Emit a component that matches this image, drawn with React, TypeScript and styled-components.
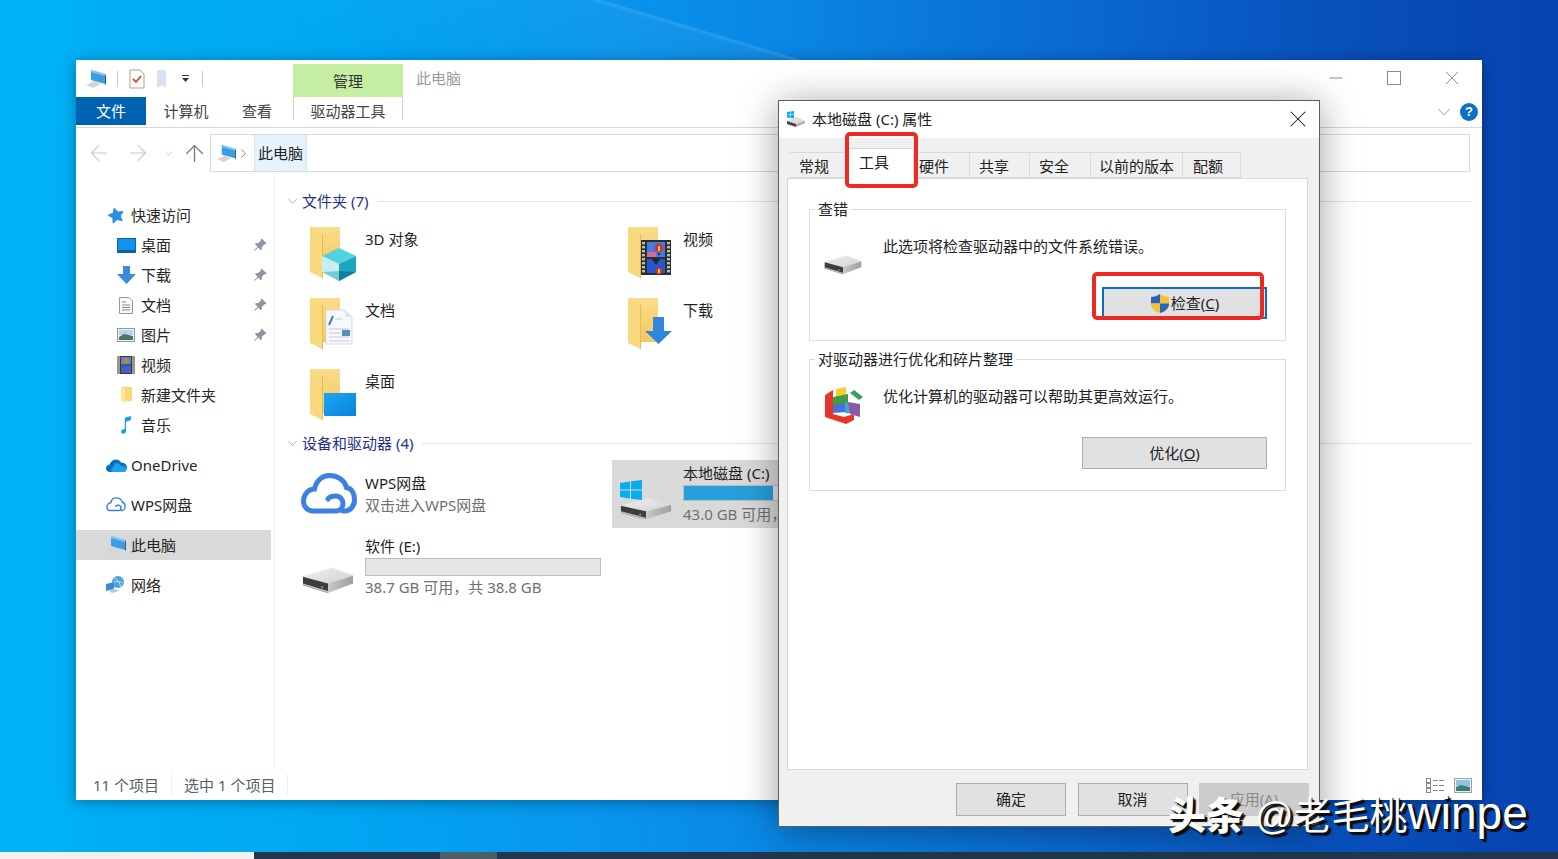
import { ReactNode } from "react";
import styled, { createGlobalStyle } from "styled-components";
import { ArrowLeft, ArrowRight, ArrowUp, ChevronDown, ChevronRight, Minus, X } from "lucide-react";
import { BsPinAngleFill, BsStarFill } from "react-icons/bs";
import { IoMusicalNote } from "react-icons/io5";

const GlobalStyle = createGlobalStyle`
  html, body {
    margin: 0;
    overflow: hidden;
  }
  body {
    font-family: "Noto Sans", "Noto Sans CJK SC", sans-serif;
    font-size: 15px;
    line-height: 22px;
    color: #262626;
  }
`;

const Desktop = styled.div`
  display: flex;
  flex-direction: column;
  width: 1558px;
  height: 859px;
  overflow: hidden;
`;

const Wallpaper = styled.div`
  position: relative;
  flex: 1;
  background: linear-gradient(90deg, #00b3f7 0%, #00a8f3 20%, #0896ee 38%, #0a84e2 52%, #0a68d0 70%, #0850bc 86%, #0642b0 100%);

  /* the light beam that runs down to the explorer's top edge */
  &::before {
    content: "";
    position: absolute;
    left: 0;
    top: 0;
    width: 820px;
    height: 60px;
    background: linear-gradient(
      196.7deg,
      rgba(255, 255, 255, 0) 0 21.2%,
      rgba(255, 255, 255, 0.14) 21.7%,
      rgba(255, 255, 255, 0.04) 23%,
      rgba(255, 255, 255, 0) 60%
    );
  }
`;

const Taskbar = styled.div`
  display: flex;
  height: 7px;
  background: #22384a;
`;

const SearchBox = styled.div`
  width: 254px;
  background: #f1f1f1;
`;

const TaskbarActive = styled.div`
  width: 57px;
  margin-left: 186px;
  background: #4c5e68;
`;

/* explorer window */
const Explorer = styled.div`
  position: absolute;
  left: 76px;
  top: 60px;
  display: flex;
  flex-direction: column;
  width: 1406px;
  height: 740px;
  background: #fff;
  box-shadow: 0 2px 14px rgba(0, 0, 0, 0.35);
`;

const TitleRow = styled.div`
  display: flex;
  align-items: flex-start;
  height: 37px;
  padding-left: 10px;
`;

const QuickTools = styled.div`
  display: flex;
  align-items: center;
  gap: 11px;
  height: 37px;
  width: 207px;
`;

const ToolSep = styled.div`
  width: 1px;
  height: 16px;
  background: #c9c9c9;
`;

const ContextTab = styled.div`
  width: 110px;
  height: 33px;
  margin-top: 4px;
  background: #c6eea3;
  text-align: center;
  line-height: 34px;
  color: #333;
`;

const WindowName = styled.div`
  margin: 7px 0 0 13px;
  color: #9a9a9a;
`;

const WindowControls = styled.div`
  display: flex;
  margin-left: auto;
  margin-right: 1px;
`;

const WindowButton = styled.div`
  display: flex;
  align-items: center;
  justify-content: center;
  width: 58px;
  height: 36px;
  color: #8c8c8c;
`;

const MaximizeBox = styled.div`
  width: 12px;
  height: 12px;
  border: 1px solid #8c8c8c;
`;

const RibbonTabs = styled.div`
  display: flex;
  align-items: flex-start;
  height: 31px;
  border-bottom: 1px solid #dadada;
  box-sizing: border-box;
`;

const FileTab = styled.div`
  width: 70px;
  height: 28px;
  background: #0063b1;
  color: #fff;
  text-align: center;
  line-height: 29px;
`;

const RibbonTab = styled.div<{ $width: number }>`
  width: ${({ $width }) => $width}px;
  height: 23px;
  text-align: center;
  line-height: 29px;
  color: #444;
`;

const ToolsTab = styled(RibbonTab)`
  margin-left: 5px;
  border-left: 1px solid #d4d4d4;
  border-right: 1px solid #d4d4d4;
  box-sizing: border-box;
`;

const RibbonRight = styled.div`
  display: flex;
  align-items: center;
  gap: 5px;
  margin-left: auto;
  margin-right: 4px;
  height: 30px;
  color: #a8a8a8;
`;

const HelpBadge = styled.div`
  width: 18px;
  height: 18px;
  border-radius: 50%;
  background: #0c6fc8;
  color: #fff;
  font: bold 13px/18px "Liberation Sans", sans-serif;
  text-align: center;
`;

const AddressRow = styled.div`
  display: flex;
  align-items: center;
  height: 44px;
  padding: 6px 12px 0 0;
  box-sizing: border-box;
`;

const NavButtons = styled.div`
  display: flex;
  align-items: center;
  width: 134px;
  padding-left: 10px;
  box-sizing: border-box;
  color: #c9c9c9;
`;

const NavForward = styled.span`
  display: flex;
  margin-left: 13px;
`;

const NavChevron = styled.span`
  display: flex;
  margin-left: 11px;
`;

const NavUp = styled.span`
  display: flex;
  margin-left: 6px;
  color: #7b7b7b;
`;

const AddressBox = styled.div`
  display: flex;
  align-items: center;
  flex: 1;
  height: 38px;
  border: 1px solid #d9d9d9;
  box-sizing: border-box;
  padding-left: 6px;
`;

const Crumb = styled.div`
  height: 36px;
  padding: 0 3px 0 3px;
  margin-left: 3px;
  background: #e5f3ff;
  border-left: 1px solid #d5e8f8;
  border-right: 1px solid #d5e8f8;
  line-height: 36px;
  color: #222;
`;

const Main = styled.div`
  display: flex;
  flex: 1;
  min-height: 0;
`;

const NavPane = styled.div`
  width: 199px;
  padding-top: 28px;
  border-right: 1px solid #f0f0f0;
  box-sizing: border-box;
`;

const NavGroup = styled.div`
  margin-bottom: 10px;
`;

const NavRow = styled.div<{ $child?: boolean; $selected?: boolean }>`
  display: flex;
  align-items: center;
  gap: 4px;
  width: 195px;
  height: 30px;
  padding-left: ${({ $child }) => ($child ? 39 : 29)}px;
  padding-right: 4px;
  box-sizing: border-box;
  background: ${({ $selected }) => ($selected ? "#d9d9d9" : "transparent")};
`;

const NavIcon = styled.span`
  display: flex;
  align-items: center;
  justify-content: center;
  width: 22px;
  height: 22px;
`;

const StarMark = styled.span`
  display: flex;
  transform: rotate(-14deg);
`;

const PinMark = styled.span`
  display: flex;
  margin-left: auto;
  color: #8a97a3;
`;

const Content = styled.div`
  flex: 1;
  min-width: 0;
  padding: 18px 10px 0 0;
  overflow: hidden;
`;

const SectionHeader = styled.div`
  display: flex;
  align-items: center;
  gap: 2px;
  height: 22px;
  padding-left: 10px;
  margin-bottom: 6px;
  color: #1e3287;
`;

const SectionToggle = styled.span`
  display: flex;
  color: #8a8a8a;
`;

const SectionLine = styled.div`
  flex: 1;
  height: 1px;
  margin-left: 7px;
  background: #e3e3e3;
`;

const TileGrid = styled.div`
  display: grid;
  grid-template-columns: repeat(2, 312px);
  column-gap: 6px;
  padding-left: 19px;
  margin-bottom: 1px;
`;

const FolderTile = styled.div`
  display: flex;
  height: 71px;
`;

const FolderIconBox = styled.div`
  width: 60px;
  height: 60px;
  margin: 7px 0 0 11px;
`;

const TileLabel = styled.div`
  margin-top: 10px;
  color: #1f1f1f;
`;

const DriveTile = styled.div<{ $selected?: boolean }>`
  display: flex;
  height: 70px;
  background: linear-gradient(
    ${({ $selected }) => ($selected ? "#d9d9d9 0 68px, transparent 68px" : "transparent, transparent")}
  );
`;

const DriveIconBox = styled.div<{ $top: number; $left: number }>`
  flex: none;
  width: 71px;
  height: 68px;
  padding: ${({ $top, $left }) => `${$top}px 0 0 ${$left}px`};
  box-sizing: border-box;
`;

const DriveText = styled.div<{ $top: number }>`
  flex: 1;
  min-width: 0;
  padding-top: ${({ $top }) => $top}px;
`;

const DriveName = styled.div`
  color: #1f1f1f;
`;

const DriveSub = styled.div`
  color: #707070;
  white-space: nowrap;
`;

const UsageTrack = styled.div<{ $height: number; $after: number }>`
  width: 236px;
  height: ${({ $height }) => $height}px;
  margin: 1px 0 ${({ $after }) => $after}px;
  background: #e6e6e6;
  border: 1px solid #bcbcbc;
  box-sizing: border-box;
`;

const UsageFill = styled.div`
  height: 100%;
  background: #26a0da;
`;

const StatusBar = styled.div`
  display: flex;
  align-items: center;
  height: 30px;
  padding: 0 10px 0 17px;
  color: #55606b;
`;

const StatusItem = styled.div`
  padding-right: 12px;
  margin-right: 12px;
  border-right: 1px solid #f0f0f0;
`;

const ViewIcons = styled.div`
  display: flex;
  gap: 9px;
  margin-left: auto;
`;

/* properties dialog */
const Dialog = styled.div`
  position: absolute;
  left: 778px;
  top: 100px;
  display: flex;
  flex-direction: column;
  width: 542px;
  height: 727px;
  border: 1px solid #5f5f5f;
  box-sizing: border-box;
  background: #f0f0f0;
  box-shadow: 0 4px 36px rgba(0, 0, 0, 0.38);
`;

const DialogTitle = styled.div`
  display: flex;
  align-items: center;
  height: 37px;
  padding: 0 0 2px 8px;
  box-sizing: border-box;
  background: #fff;
  color: #222;
`;

const DialogName = styled.div`
  margin-left: 7px;
`;

const DialogClose = styled.div`
  display: flex;
  margin-left: auto;
  margin-right: 7px;
  color: #222;
`;

const DialogBody = styled.div`
  display: flex;
  flex-direction: column;
  flex: 1;
  min-height: 0;
  padding: 10px 11px 0 8px;
`;

const TabStrip = styled.div`
  display: flex;
  align-items: flex-end;
  height: 30px;
  padding-left: 3px;
`;

const Tab = styled.div<{ $width: number; $inset: number; $active?: boolean }>`
  position: relative;
  width: ${({ $width }) => $width}px;
  height: ${({ $active }) => ($active ? 31 : 26)}px;
  margin-bottom: ${({ $active }) => ($active ? -1 : 0)}px;
  padding-left: ${({ $inset }) => $inset}px;
  box-sizing: border-box;
  border: 1px solid #d9d9d9;
  border-bottom: ${({ $active }) => ($active ? "none" : "1px solid #d9d9d9")};
  border-left: ${({ $active }) => ($active ? "1px solid #d9d9d9" : "none")};
  background: ${({ $active }) => ($active ? "#fff" : "#f0f0f0")};
  line-height: ${({ $active }) => ($active ? 27 : 26)}px;
  color: #222;
  z-index: ${({ $active }) => ($active ? 1 : 0)};
`;

const TabPanel = styled.div`
  display: flex;
  flex-direction: column;
  gap: 18px;
  flex: 1;
  min-height: 0;
  padding: 30px 0 0 21px;
  background: #fff;
  border: 1px solid #d9d9d9;
  box-sizing: border-box;
`;

const GroupBox = styled.div`
  position: relative;
  display: grid;
  grid-template-columns: 60px 1fr;
  grid-template-rows: 78px 32px;
  width: 477px;
  height: 132px;
  padding: 0 18px 0 14px;
  border: 1px solid #dcdcdc;
  box-sizing: border-box;
`;

const GroupLegend = styled.div`
  position: absolute;
  left: 5px;
  top: -12px;
  padding: 0 3px;
  background: #fff;
  color: #222;
`;

const GroupIcon = styled.div<{ $top: number }>`
  padding-top: ${({ $top }) => $top}px;
`;

const GroupText = styled.div`
  padding-top: 25px;
  margin-left: -1px;
  color: #222;
`;

const ActionButton = styled.div<{ $width: number; $focused?: boolean }>`
  grid-column: 1 / 3;
  justify-self: end;
  display: flex;
  align-items: center;
  justify-content: center;
  gap: 1px;
  width: ${({ $width }) => $width}px;
  height: 32px;
  margin-top: -1px;
  box-sizing: border-box;
  background: #e1e1e1;
  border: ${({ $focused }) => ($focused ? "2px solid #0a6cc4" : "1px solid #adadad")};
  color: #222;
`;

const DialogFooter = styled.div`
  display: flex;
  justify-content: flex-end;
  gap: 11.5px;
  height: 56px;
  padding: 13px 0 0;
  margin-right: -1px;
  box-sizing: border-box;
`;

const FooterButton = styled.div<{ $disabled?: boolean }>`
  width: 110px;
  height: 33px;
  box-sizing: border-box;
  background: ${({ $disabled }) => ($disabled ? "#cccccc" : "#e1e1e1")};
  border: 1px solid ${({ $disabled }) => ($disabled ? "#cccccc" : "#adadad")};
  text-align: center;
  line-height: 31px;
  color: ${({ $disabled }) => ($disabled ? "#8a8a8a" : "#222")};
`;

const Annotation = styled.div<{ $left: number; $top: number; $width: number; $height: number }>`
  position: absolute;
  left: ${({ $left }) => $left}px;
  top: ${({ $top }) => $top}px;
  width: ${({ $width }) => $width}px;
  height: ${({ $height }) => $height}px;
  border: 4px solid #ea2a23;
  border-radius: 5px;
  box-sizing: border-box;
  z-index: 2;
`;

const Watermark = styled.div`
  position: absolute;
  left: 1168px;
  top: 788px;
  display: flex;
  align-items: baseline;
  white-space: nowrap;
  color: #fff;
  font-family: "Liberation Sans", "Noto Sans CJK SC", sans-serif;
  font-size: 38px;
  line-height: 50px;
  text-shadow: 3px 3px 1px #0c0c0c, 1px 1px 1px #0c0c0c;
`;

const WatermarkBrand = styled.span`
  font-weight: 900;
  margin-right: 11px;
`;

const WatermarkLatin = styled.span`
  font-size: 46px;
`;

/* icons */
const ComputerIcon = ({ size = 20 }: { size?: number }) => (
  <svg width={size} height={size} viewBox="0 0 20 20">
    <polygon points="0,16 8,12 15,15 7,19" fill="#d2d6d9" />
    <polygon points="5,1 19,5 19,15 5,11" fill="#3c9ee2" />
    <polygon points="5,1 19,5 19,7 5,3" fill="#86c8f2" />
    <polygon points="19,5 20,6 20,16 19,15" fill="#4a5660" />
  </svg>
);

const CheckDocIcon = () => (
  <svg width="16" height="20" viewBox="0 0 16 20">
    <path d="M1 1h10l4 4v14H1z" fill="#fff" stroke="#b5a08e" />
    <path d="M4 10l3 3 5-6" fill="none" stroke="#d5482c" strokeWidth="1.8" />
  </svg>
);

const PaleDocIcon = () => (
  <svg width="14" height="18" viewBox="0 0 14 18">
    <path d="M1 0h8l1 2v16l-4-3-5 3z" fill="#d6e2f0" />
  </svg>
);

const DropMark = () => (
  <svg width="10" height="10" viewBox="0 0 10 10">
    <rect x="1" y="1" width="7" height="1" fill="#333" />
    <polygon points="1,4 8,4 4.5,8" fill="#333" />
  </svg>
);

const FolderBase = ({ children }: { children?: ReactNode }) => (
  <svg width="60" height="60" viewBox="0 0 60 60">
    <defs>
      <linearGradient id="folderBack" x1="0" y1="0" x2="0" y2="1">
        <stop offset="0" stopColor="#fbdc8c" />
        <stop offset="1" stopColor="#f3c95f" />
      </linearGradient>
    </defs>
    <polygon points="5,2 35,2 35,46 17,46 5,46" fill="url(#folderBack)" />
    <polygon points="5,2 17,9 17,53 5,47" fill="#f9d97e" />
    <polygon points="17,9 18,9 18,53 17,53" fill="#e6bb52" />
    {children}
  </svg>
);

const CubeOverlay = () => (
  <>
    <polygon points="34,23 51,31 34,39 17,31" fill="#4fd3de" />
    <polygon points="17,31 34,39 34,56 17,47" fill="#c6edf0" />
    <polygon points="34,39 51,31 51,47 34,56" fill="#1fa6bf" />
    <polygon points="34,46 51,47 34,56" fill="#137f9c" />
    <polygon points="17,47 34,46 34,56" fill="#73cdd8" />
  </>
);

const sprockets = [17, 21, 25, 29, 33, 37, 41, 45];

const FilmOverlay = () => (
  <>
    <rect x="18" y="15" width="30" height="35" fill="#26302e" />
    {sprockets.map((y) => (
      <g key={y} fill="#b9bfa8">
        <rect x="19" y={y} width="3" height="2.4" />
        <rect x="44" y={y} width="3" height="2.4" />
      </g>
    ))}
    <rect x="24" y="17" width="18" height="15" fill="#4a78e0" />
    <rect x="24" y="34" width="18" height="14" fill="#2456cc" />
    <rect x="24" y="27" width="9" height="5" fill="#d06a9c" />
    <circle cx="36" cy="23" r="4" fill="#c8352c" />
    <rect x="35" y="21" width="2" height="5" fill="#e8c440" />
    <rect x="35" y="28" width="2" height="2" fill="#2b2b2b" />
    <path d="M29 34L37 34L33 40Z" fill="#20261f" />
    <circle cx="36" cy="46" r="3.5" fill="#c8352c" />
    <rect x="35" y="44" width="2" height="4" fill="#e8c440" />
  </>
);

const DocOverlay = () => (
  <>
    <path d="M21 14h19l7 7v27H21z" fill="#f6f8fa" stroke="#d5dbe0" />
    <path d="M40 14v7h7z" fill="#dfe5ea" />
    <path d="M24 29l4-9" stroke="#3d7cc9" strokeWidth="2" />
    <path d="M30 23h8M24 33h20M24 37h12M24 41h20M24 45h20" stroke="#c3ccd6" />
    <rect x="37" y="34" width="8" height="6" fill="#5a8fb5" />
  </>
);

const DesktopOverlay = () => (
  <>
    <defs>
      <linearGradient id="screenBlue" x1="0" y1="0" x2="1" y2="1">
        <stop offset="0" stopColor="#1aa7f5" />
        <stop offset="1" stopColor="#0a82dc" />
      </linearGradient>
    </defs>
    <rect x="19" y="26" width="32" height="23" fill="url(#screenBlue)" />
  </>
);

const DownloadOverlay = () => (
  <polygon points="30,21 41,21 41,35 49,35 35.5,48 22,35 30,35" fill="#2f86dd" />
);

const WpsCloudIcon = ({ size = 56, width = 5 }: { size?: number; width?: number }) => (
  <svg width={size} height={(size * 44) / 56} viewBox="0 0 56 44">
    <path
      d="M27 26C29 23 32 23 35 23C39 23 42 27 42 30.5C42 35 38.5 38 35 38L12 38C6 38 2.5 33 2.5 28C2.5 21 8 16 13.5 16C15 8 21 2.5 28.5 2.5C37 2.5 44 8 45.5 14.5C51 15.5 53.5 21 53.5 27C53.5 33 49 38 44 38L42 38"
      fill="none"
      stroke="#3b80e2"
      strokeWidth={width}
      strokeLinecap="round"
    />
  </svg>
);

const DriveGraphic = ({ width = 54, height = 28 }: { width?: number; height?: number }) => (
  <svg width={width} height={height} viewBox="0 0 54 28" preserveAspectRatio="none">
    <defs>
      <linearGradient id="driveTop" x1="0" y1="0" x2="1" y2="1">
        <stop offset="0" stopColor="#f0f0f0" />
        <stop offset="1" stopColor="#d2d2d2" />
      </linearGradient>
      <linearGradient id="driveSide" x1="0" y1="0" x2="1" y2="0">
        <stop offset="0" stopColor="#c9c9c9" />
        <stop offset="1" stopColor="#9e9e9e" />
      </linearGradient>
    </defs>
    <polygon points="1,10 31,1 53,9 27,17" fill="url(#driveTop)" stroke="url(#driveTop)" strokeLinejoin="round" />
    <polygon points="1,10 27,17 27,27 1,19" fill="#3d3d3d" />
    <polygon points="1,17 27,25 27,27 1,19" fill="#bdbdbd" />
    <polygon points="27,17 53,9 53,17 27,27" fill="url(#driveSide)" />
    <rect x="20" y="20" width="2" height="2" fill="#46c46a" />
  </svg>
);

const WindowsPanes = () => (
  <svg width="22" height="20" viewBox="0 0 22 20">
    <polygon points="0,3 10,1.5 10,9.5 0,9.5" fill="#06aef0" />
    <polygon points="11,1.3 22,0 22,9.5 11,9.5" fill="#06aef0" />
    <polygon points="0,10.5 10,10.5 10,18.5 0,17" fill="#06aef0" />
    <polygon points="11,10.5 22,10.5 22,20 11,18.7" fill="#06aef0" />
  </svg>
);

const SystemDrive = styled.div`
  display: grid;
  grid-template-rows: 18px auto;
  justify-items: start;
`;

const ShieldIcon = () => (
  <svg width="20" height="21" viewBox="0 0 20 21">
    <path d="M10 1C7 3 4 4 1 4V10.5H10Z" fill="#2a63b8" />
    <path d="M10 1C13 3 16 4 19 4V10.5H10Z" fill="#f2c230" />
    <path d="M1 10.5H10V20C6 19 1 16 1 11Z" fill="#f2c230" />
    <path d="M19 10.5H10V20C14 19 19 16 19 11Z" fill="#2a63b8" />
  </svg>
);

const DefragIcon = () => (
  <svg width="40" height="38" viewBox="0 0 40 38">
    <polygon points="1,8 9,3 9,27 20,30 30,27 30,33 22,37 1,30" fill="#e8352b" />
    <polygon points="12,2 22,0 22,10 12,12" fill="#f3d02a" />
    <polygon points="9,10 24,7 24,16 9,19" fill="#3f9d48" />
    <polygon points="9,18 22,16 22,25 9,26" fill="#4672d8" />
    <polygon points="21,16 27,16 27,26 21,26" fill="#3fa6d8" />
    <polygon points="24,15 36,17 36,30 26,27" fill="#8a5aa8" />
    <polygon points="26,6 30,3 39,10 35,13" fill="#3c9d5a" />
  </svg>
);

const SmallDesktop = () => (
  <svg width="19" height="15" viewBox="0 0 19 15">
    <rect x="0.5" y="0.5" width="18" height="14" fill="#1292ea" stroke="#0a67ad" />
    <rect x="1" y="12" width="17" height="2" fill="#0a5f9e" />
  </svg>
);

const SmallDown = () => (
  <svg width="19" height="18" viewBox="0 0 19 18">
    <polygon points="6,0 13,0 13,8 19,8 9.5,18 0,8 6,8" fill="#3a8be0" />
  </svg>
);

const SmallDoc = () => (
  <svg width="14" height="17" viewBox="0 0 14 17">
    <path d="M0.5 0.5H10L13.5 4V16.5H0.5Z" fill="#f7f9fb" stroke="#8f99a3" />
    <path d="M3 5H7M3 8H11M3 10.5H11M3 13H11" stroke="#7f8a96" />
  </svg>
);

const SmallPicture = () => (
  <svg width="18" height="14" viewBox="0 0 18 14">
    <rect x="0.5" y="0.5" width="17" height="13" fill="#eef2f5" stroke="#8f99a3" />
    <rect x="2" y="2" width="14" height="5" fill="#b7d3e6" />
    <polygon points="2,9 7,6 16,8 16,12 2,12" fill="#4f7463" />
  </svg>
);

const SmallFilm = () => (
  <svg width="18" height="18" viewBox="0 0 18 18">
    <rect width="18" height="18" fill="#3a3a3a" />
    <rect x="0" y="0" width="3" height="18" fill="#9a9a85" />
    <rect x="15" y="0" width="3" height="18" fill="#9a9a85" />
    <rect x="4" y="1" width="10" height="7.5" fill="#5f84cf" />
    <rect x="4" y="9.5" width="10" height="7.5" fill="#3d61c4" />
    <circle cx="9" cy="5" r="2.5" fill="#c2872c" />
  </svg>
);

const SmallFolder = () => (
  <svg width="12" height="16" viewBox="0 0 12 16">
    <rect x="1" y="0" width="11" height="14" fill="#f8d775" />
    <polygon points="1,0 5,2 5,16 1,14" fill="#fce6a0" />
  </svg>
);

const OneDriveIcon = () => (
  <svg width="21" height="13" viewBox="0 0 21 13">
    <path d="M4 13C1.5 13 0 11.3 0 9.3C0 7.3 1.5 5.8 3.5 5.6C4.5 2.5 7 0.5 10 0.5C12.4 0.5 14.4 1.8 15.4 3.8C18.5 3.6 21 5.6 21 8.5C21 11 19.3 13 17 13Z" fill="#0a6fc4" />
    <path d="M10 4C12.5 4 14.3 5.2 15 7C18 7 20.5 8 21 9C20.6 11.4 19 13 17 13H7C5.8 13 5 12 5 10.8C5 9.3 6.2 8.2 7.6 8.2C7.8 6 8.6 4.4 10 4Z" fill="#1aa3e8" />
  </svg>
);

const NetworkIcon = () => (
  <svg width="20" height="18" viewBox="0 0 20 18">
    <circle cx="12" cy="6" r="6" fill="#4fa3dc" />
    <path d="M8 2c3 1 6 5 7 9M6 7c3-2 8-2 11 0" stroke="#c8e6f7" fill="none" />
    <polygon points="0,8 8,6 8,13 0,15" fill="#3b8dcf" />
    <polygon points="3,15 10,13 13,15 6,17" fill="#b8c4cc" />
  </svg>
);

const ListViewIcon = () => (
  <svg width="19" height="15" viewBox="0 0 19 15">
    <g fill="none" stroke="#8a8a8a">
      <rect x="0.5" y="0.5" width="4" height="4" />
      <rect x="0.5" y="5.5" width="4" height="4" />
      <rect x="0.5" y="10.5" width="4" height="4" />
      <path d="M7 2.5H18M7 7.5H18M7 12.5H18" strokeDasharray="5 1" />
    </g>
  </svg>
);

const ThumbViewIcon = () => (
  <svg width="18" height="15" viewBox="0 0 18 15">
    <rect x="0.5" y="0.5" width="17" height="14" fill="#e8eef2" stroke="#9aa4ac" />
    <rect x="2" y="2" width="14" height="6" fill="#8ec3e2" />
    <polygon points="2,9 7,7 16,9 16,13 2,13" fill="#3e7a78" />
  </svg>
);

const SystemDriveMini = () => (
  <svg width="18" height="16" viewBox="0 0 18 16">
    <polygon points="0,1 3,0.5 3,3.5 0,3.5" fill="#06aef0" />
    <polygon points="3.5,0.4 7,0 7,3.5 3.5,3.5" fill="#06aef0" />
    <polygon points="0,4 3,4 3,7 0,6.5" fill="#06aef0" />
    <polygon points="3.5,4 7,4 7,7.5 3.5,7" fill="#06aef0" />
    <polygon points="0,10 9,6 18,10 9,13" fill="#dcdcdc" />
    <polygon points="0,10 9,13 9,16 0,13" fill="#444" />
    <polygon points="9,13 18,10 18,12 9,16" fill="#aaa" />
  </svg>
);

const quickAccess = [
  { label: "桌面", icon: <SmallDesktop />, pinned: true },
  { label: "下载", icon: <SmallDown />, pinned: true },
  { label: "文档", icon: <SmallDoc />, pinned: true },
  { label: "图片", icon: <SmallPicture />, pinned: true },
  { label: "视频", icon: <SmallFilm /> },
  { label: "新建文件夹", icon: <SmallFolder /> },
  { label: "音乐", icon: <IoMusicalNote size={20} color="#1c9be6" /> },
];

const folders = [
  { label: "3D 对象", overlay: <CubeOverlay /> },
  { label: "视频", overlay: <FilmOverlay /> },
  { label: "文档", overlay: <DocOverlay /> },
  { label: "下载", overlay: <DownloadOverlay /> },
  { label: "桌面", overlay: <DesktopOverlay /> },
];

const tabs = [
  { label: "常规", width: 58, inset: 9 },
  { label: "工具", width: 66, inset: 10, active: true },
  { label: "硬件", width: 56, inset: 5 },
  { label: "共享", width: 60, inset: 9 },
  { label: "安全", width: 61, inset: 9 },
  { label: "以前的版本", width: 92, inset: 8 },
  { label: "配额", width: 58, inset: 10 },
];

export default function App() {
  return (
    <>
      <GlobalStyle />
      <Desktop>
        <Wallpaper>
          <Explorer>
            <TitleRow>
              <QuickTools>
                <ComputerIcon />
                <ToolSep />
                <CheckDocIcon />
                <PaleDocIcon />
                <DropMark />
                <ToolSep />
              </QuickTools>
              <ContextTab>管理</ContextTab>
              <WindowName>此电脑</WindowName>
              <WindowControls>
                <WindowButton>
                  <Minus size={20} strokeWidth={1.2} />
                </WindowButton>
                <WindowButton>
                  <MaximizeBox />
                </WindowButton>
                <WindowButton>
                  <X size={24} strokeWidth={1} />
                </WindowButton>
              </WindowControls>
            </TitleRow>

            <RibbonTabs>
              <FileTab>文件</FileTab>
              <RibbonTab $width={80}>计算机</RibbonTab>
              <RibbonTab $width={62}>查看</RibbonTab>
              <ToolsTab $width={110}>驱动器工具</ToolsTab>
              <RibbonRight>
                <ChevronDown size={22} strokeWidth={1.1} />
                <HelpBadge>?</HelpBadge>
              </RibbonRight>
            </RibbonTabs>

            <AddressRow>
              <NavButtons>
                <ArrowLeft size={26} strokeWidth={1} />
                <NavForward>
                  <ArrowRight size={26} strokeWidth={1} />
                </NavForward>
                <NavChevron>
                  <ChevronDown size={13} strokeWidth={1.6} />
                </NavChevron>
                <NavUp>
                  <ArrowUp size={27} strokeWidth={1.2} />
                </NavUp>
              </NavButtons>
              <AddressBox>
                <ComputerIcon size={19} />
                <ChevronRight size={15} color="#777" strokeWidth={1.4} />
                <Crumb>此电脑</Crumb>
              </AddressBox>
            </AddressRow>

            <Main>
              <NavPane>
                <NavGroup>
                  <NavRow>
                    <NavIcon>
                      <StarMark>
                        <BsStarFill size={16} color="#2a8fe0" />
                      </StarMark>
                    </NavIcon>
                    快速访问
                  </NavRow>
                  {quickAccess.map((item) => (
                    <NavRow $child key={item.label}>
                      <NavIcon>{item.icon}</NavIcon>
                      {item.label}
                      {item.pinned && (
                        <PinMark>
                          <BsPinAngleFill size={14} />
                        </PinMark>
                      )}
                    </NavRow>
                  ))}
                </NavGroup>
                <NavGroup>
                  <NavRow>
                    <NavIcon>
                      <OneDriveIcon />
                    </NavIcon>
                    OneDrive
                  </NavRow>
                </NavGroup>
                <NavGroup>
                  <NavRow>
                    <NavIcon>
                      <WpsCloudIcon size={20} width={4} />
                    </NavIcon>
                    WPS网盘
                  </NavRow>
                </NavGroup>
                <NavGroup>
                  <NavRow $selected>
                    <NavIcon>
                      <ComputerIcon />
                    </NavIcon>
                    此电脑
                  </NavRow>
                </NavGroup>
                <NavGroup>
                  <NavRow>
                    <NavIcon>
                      <NetworkIcon />
                    </NavIcon>
                    网络
                  </NavRow>
                </NavGroup>
              </NavPane>

              <Content>
                <SectionHeader>
                  <SectionToggle>
                    <ChevronDown size={15} strokeWidth={1.1} />
                  </SectionToggle>
                  文件夹 (7)
                  <SectionLine />
                </SectionHeader>
                <TileGrid>
                  {folders.map((folder) => (
                    <FolderTile key={folder.label}>
                      <FolderIconBox>
                        <FolderBase>{folder.overlay}</FolderBase>
                      </FolderIconBox>
                      <TileLabel>{folder.label}</TileLabel>
                    </FolderTile>
                  ))}
                </TileGrid>

                <SectionHeader>
                  <SectionToggle>
                    <ChevronDown size={15} strokeWidth={1.1} />
                  </SectionToggle>
                  设备和驱动器 (4)
                  <SectionLine />
                </SectionHeader>
                <TileGrid>
                  <DriveTile>
                    <DriveIconBox $top={13} $left={7}>
                      <WpsCloudIcon />
                    </DriveIconBox>
                    <DriveText $top={12}>
                      <DriveName>WPS网盘</DriveName>
                      <DriveSub>双击进入WPS网盘</DriveSub>
                    </DriveText>
                  </DriveTile>
                  <DriveTile $selected>
                    <DriveIconBox $top={20} $left={8}>
                      <SystemDrive>
                        <WindowsPanes />
                        <DriveGraphic width={52} height={22} />
                      </SystemDrive>
                    </DriveIconBox>
                    <DriveText $top={2}>
                      <DriveName>本地磁盘 (C:)</DriveName>
                      <UsageTrack $height={16} $after={2}>
                        <UsageFill style={{ width: "38%" }} />
                      </UsageTrack>
                      <DriveSub>43.0 GB 可用，共 99.9 GB</DriveSub>
                    </DriveText>
                  </DriveTile>
                  <DriveTile>
                    <DriveIconBox $top={37} $left={8}>
                      <DriveGraphic width={52} height={27} />
                    </DriveIconBox>
                    <DriveText $top={5}>
                      <DriveName>软件 (E:)</DriveName>
                      <UsageTrack $height={18} $after={0}>
                        <UsageFill style={{ width: "0%" }} />
                      </UsageTrack>
                      <DriveSub>38.7 GB 可用，共 38.8 GB</DriveSub>
                    </DriveText>
                  </DriveTile>
                </TileGrid>
              </Content>
            </Main>

            <StatusBar>
              <StatusItem>11 个项目</StatusItem>
              <StatusItem>选中 1 个项目</StatusItem>
              <ViewIcons>
                <ListViewIcon />
                <ThumbViewIcon />
              </ViewIcons>
            </StatusBar>
          </Explorer>

          <Dialog>
            <DialogTitle>
              <SystemDriveMini />
              <DialogName>本地磁盘 (C:) 属性</DialogName>
              <DialogClose>
                <X size={28} strokeWidth={0.9} />
              </DialogClose>
            </DialogTitle>
            <DialogBody>
              <TabStrip>
                {tabs.map((tab) => (
                  <Tab key={tab.label} $width={tab.width} $inset={tab.inset} $active={tab.active}>
                    {tab.label}
                  </Tab>
                ))}
              </TabStrip>
              <TabPanel>
                <GroupBox>
                  <GroupLegend>查错</GroupLegend>
                  <GroupIcon $top={45}>
                    <DriveGraphic width={38} height={20} />
                  </GroupIcon>
                  <GroupText>此选项将检查驱动器中的文件系统错误。</GroupText>
                  <ActionButton $width={165} $focused>
                    <ShieldIcon />
                    <span>
                      检查(<u>C</u>)
                    </span>
                  </ActionButton>
                </GroupBox>
                <GroupBox>
                  <GroupLegend>对驱动器进行优化和碎片整理</GroupLegend>
                  <GroupIcon $top={27}>
                    <DefragIcon />
                  </GroupIcon>
                  <GroupText>优化计算机的驱动器可以帮助其更高效运行。</GroupText>
                  <ActionButton $width={185}>
                    <span>
                      优化(<u>O</u>)
                    </span>
                  </ActionButton>
                </GroupBox>
              </TabPanel>
              <DialogFooter>
                <FooterButton>确定</FooterButton>
                <FooterButton>取消</FooterButton>
                <FooterButton $disabled>应用(A)</FooterButton>
              </DialogFooter>
            </DialogBody>
            <Annotation $left={66} $top={31} $width={73} $height={56} />
            <Annotation $left={313} $top={171} $width={172} $height={48} />
          </Dialog>

          <Watermark>
            <WatermarkBrand>头条</WatermarkBrand>
            @老毛桃<WatermarkLatin>winpe</WatermarkLatin>
          </Watermark>
        </Wallpaper>
        <Taskbar>
          <SearchBox />
          <TaskbarActive />
        </Taskbar>
      </Desktop>
    </>
  );
}
